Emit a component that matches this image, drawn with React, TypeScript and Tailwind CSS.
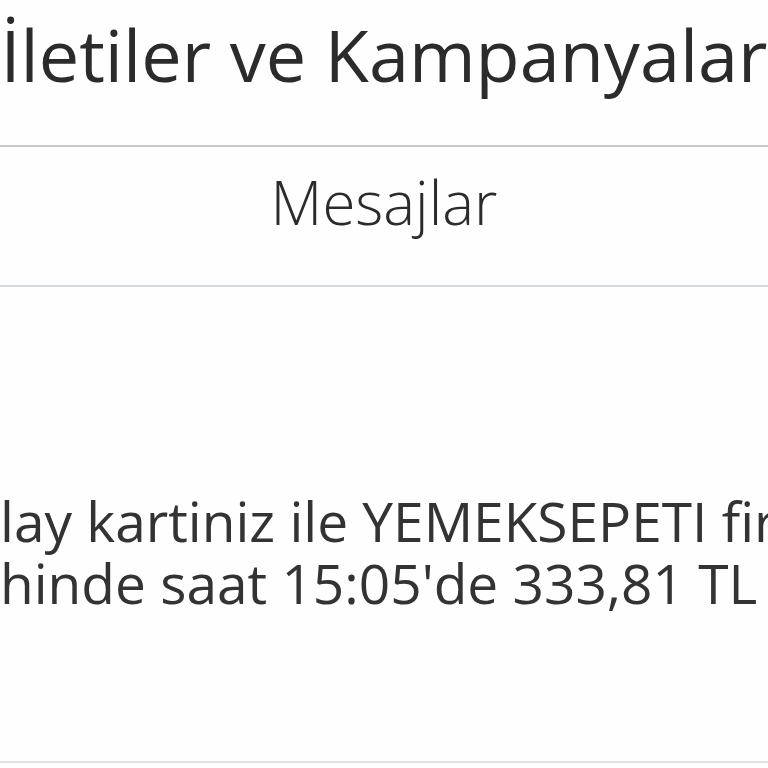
export default function App() {
  const font = { fontFamily: '"Open Sans", "Noto Sans", sans-serif' };
  return (
    <div className="w-[768px] h-[768px] overflow-hidden bg-[#fefefe] text-[#2b2b2b]" style={font}>
      <div className="h-[145px] overflow-hidden">
        <div className="pt-[18px] text-[72px] leading-[72px] whitespace-nowrap flex justify-center">
          <span>İletiler ve Kampanyalar</span>
        </div>
      </div>
      <div className="h-[2px] bg-[#c9c9c9]" />
      <div className="h-[138px] flex justify-center">
        <div className="pt-[25px] text-[60px] leading-[60px] font-light whitespace-nowrap">Mesajlar</div>
      </div>
      <div className="h-[2px] bg-[#d6d9dc]" />
      <div className="h-[474px] overflow-hidden pt-[203px] text-[55px] leading-[62px] whitespace-nowrap text-[#333]">
        <div>lay kartiniz ile YEMEKSEPETI firmasından</div>
        <div>hinde saat 15:05'de 333,81 TL tutarında</div>
      </div>
      <div className="h-[2px] bg-[#e2e2e2]" />
    </div>
  );
}
